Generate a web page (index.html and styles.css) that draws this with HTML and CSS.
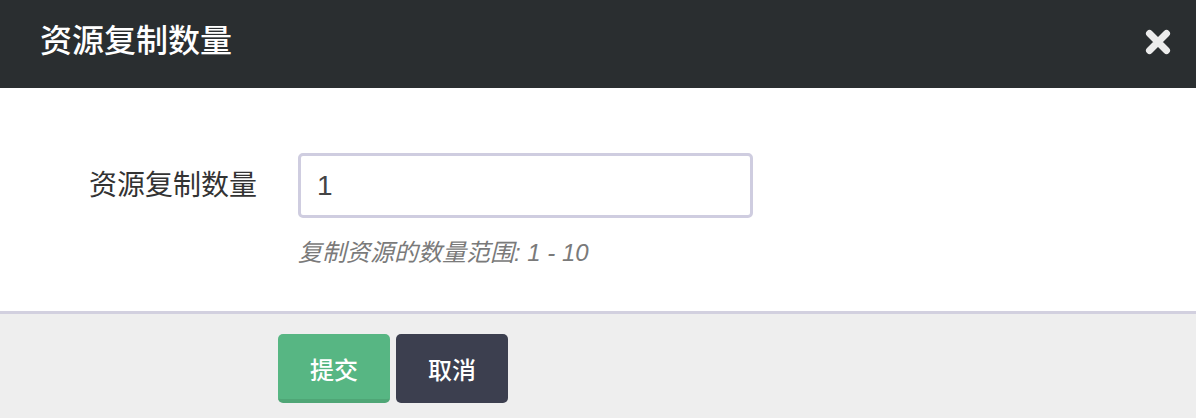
FILE: index.html
```html
<!DOCTYPE html>
<html lang="zh-CN">
<head>
<meta charset="utf-8">
<title>资源复制数量</title>
<link rel="stylesheet" href="styles.css">
</head>
<body>
<div class="modal">
  <div class="modal-header">
    <h2 class="modal-title">资源复制数量</h2>
    <button class="close" type="button" aria-label="关闭">
      <svg width="26" height="26" viewBox="0 0 26 26"><path d="M4.5 4.5 L21.5 21.5 M21.5 4.5 L4.5 21.5" stroke="#ececec" stroke-width="7" stroke-linecap="round" fill="none"/></svg>
    </button>
  </div>
  <div class="modal-body">
    <div class="form-row">
      <label class="form-label" for="count">资源复制数量</label>
      <div class="form-field">
        <input class="form-input" id="count" type="text" value="1">
        <p class="help">复制资源的数量范围: 1 - 10</p>
      </div>
    </div>
  </div>
  <div class="modal-footer">
    <div class="actions">
      <button class="btn btn-primary" type="button">提交</button>
      <button class="btn btn-dark" type="button">取消</button>
    </div>
  </div>
</div>
</body>
</html>
```

FILE: styles.css
```css
* { box-sizing: border-box; }
html, body { margin: 0; padding: 0; }
body {
  font-family: "Liberation Sans", "Noto Sans CJK SC", sans-serif;
  background: #eeeeee;
  color: #333;
}
.modal { width: 1196px; height: 418px; overflow: hidden; display: flex; flex-direction: column; }
.modal-header {
  height: 88px;
  flex: none;
  background: #2a2e30;
  display: flex;
  align-items: center;
  justify-content: space-between;
  padding: 0 25px 0 40px;
}
.modal-title {
  margin: 0;
  color: #ffffff;
  font-size: 32px;
  font-weight: 500;
  line-height: 1;
  padding-bottom: 6px;
}
.close {
  background: none;
  border: 0;
  padding: 0;
  width: 26px;
  height: 26px;
  margin-bottom: 4px;
  cursor: pointer;
  display: flex;
}
.modal-body {
  flex: none;
  background: #ffffff;
  height: 226px;
  padding-top: 65px;
  border-bottom: 3px solid #d2d0df;
}
.form-row {
  display: grid;
  grid-template-columns: 257px 455px;
  column-gap: 41px;
  align-items: start;
}
.form-label {
  text-align: right;
  font-size: 28px;
  line-height: 65px;
  color: #333;
}
.form-input {
  display: block;
  width: 455px;
  height: 65px;
  border: 3px solid #cfcde0;
  border-radius: 5px;
  padding: 0 16px;
  font-family: "Liberation Sans", "Noto Sans CJK SC", sans-serif;
  font-size: 28px;
  color: #444;
  outline: none;
}
.help {
  margin: 21px 0 0;
  font-size: 24px;
  font-style: italic;
  color: #7a7a7a;
  line-height: 28px;
}
.modal-footer { flex: 1; background: #eeeeee; }
.actions {
  display: flex;
  gap: 6px;
  padding: 20px 0 0 278px;
}
.btn {
  width: 112px;
  height: 69px;
  border: 0;
  border-radius: 5px;
  color: #ffffff;
  font-family: "Liberation Sans", "Noto Sans CJK SC", sans-serif;
  font-size: 24px;
  font-weight: 500;
  padding: 0;
  cursor: pointer;
}
.btn-primary { background: #57b683; border-bottom: 4px solid #4fa676; padding-top: 4px; }
.btn-dark { background: #3c3f4f; }
```
